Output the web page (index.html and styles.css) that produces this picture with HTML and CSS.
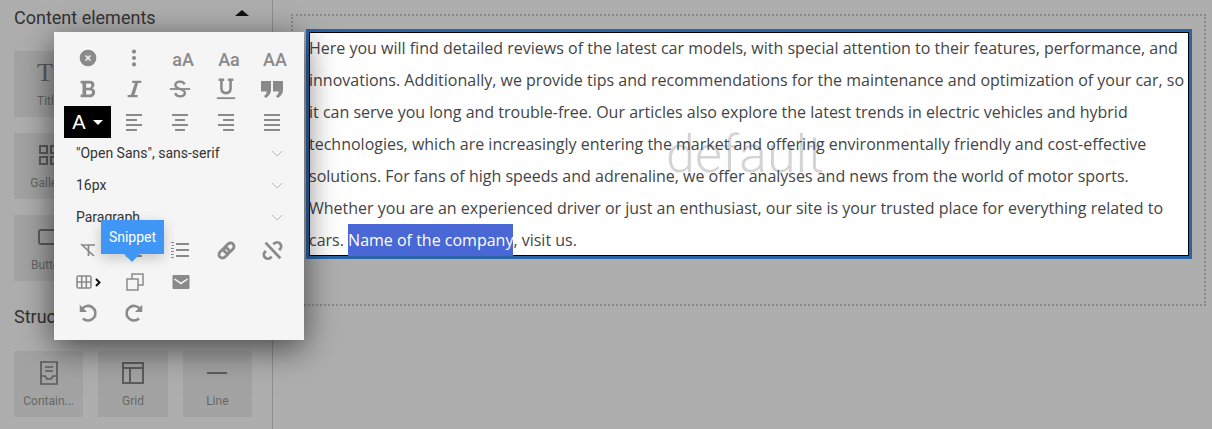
FILE: index.html
```html
<!DOCTYPE html>
<html lang="en">
<head>
  <meta charset="UTF-8" />
  <title>Page builder</title>
  <link rel="stylesheet" href="styles.css">
</head>
<body>
  <div class="layout">
    <aside class="sidebar">
      <div class="section-head">
        <h2>Content elements</h2>
        <span class="collapse-arrow"></span>
      </div>
      <div class="tiles">
        <div class="tile">
          <span class="tile-icon tile-t">Tt</span>
          <span class="tile-label">Title</span>
        </div>
        <div class="tile"></div>
        <div class="tile"></div>
        <div class="tile">
          <svg class="tile-icon" viewBox="0 0 24 24" width="24" height="24"><path fill="none" stroke="#5c5c5c" stroke-width="2" d="M3 3h7v7H3zM14 3h7v7h-7zM3 14h7v7H3zM14 14h7v7h-7z"/></svg>
          <span class="tile-label">Gallery</span>
        </div>
        <div class="tile"></div>
        <div class="tile"></div>
        <div class="tile">
          <svg class="tile-icon" viewBox="0 0 24 24" width="24" height="24"><rect x="2" y="5" width="20" height="14" rx="2" fill="none" stroke="#5c5c5c" stroke-width="2"/></svg>
          <span class="tile-label">Button</span>
        </div>
        <div class="tile"></div>
        <div class="tile"></div>
      </div>
      <div class="section-head section-head-2">
        <h2>Structure</h2>
      </div>
      <div class="tiles">
        <div class="tile">
          <svg class="tile-icon" viewBox="0 0 24 24" width="24" height="24"><path fill="none" stroke="#5c5c5c" stroke-width="1.700" d="M4 1h16v22H4zM4 15h4l2 3h4l2-3h4M8 6h8M8 10h8"/></svg>
          <span class="tile-label">Contain...</span>
        </div>
        <div class="tile">
          <svg class="tile-icon" viewBox="0 0 24 24" width="24" height="24"><path fill="none" stroke="#5c5c5c" stroke-width="2" d="M2 2h20v20H2zM2 7h20M9 7v15"/></svg>
          <span class="tile-label">Grid</span>
        </div>
        <div class="tile">
          <svg class="tile-icon" viewBox="0 0 24 24" width="24" height="24"><path fill="none" stroke="#5c5c5c" stroke-width="2" d="M2 12h20"/></svg>
          <span class="tile-label">Line</span>
        </div>
      </div>
    </aside>

    <main class="canvas">
      <div class="drop-zone">
        <div class="editor-frame">
          <div class="editor-text">
            <span class="watermark">default</span>
            <p>Here you will find detailed reviews of the latest car models, with special attention to their features, performance, and innovations. Additionally, we provide tips and recommendations for the maintenance and optimization of your car, so it can serve you long and trouble-free. Our articles also explore the latest trends in electric vehicles and hybrid technologies, which are increasingly entering the market and offering environmentally friendly and cost-effective solutions. For fans of high speeds and adrenaline, we offer analyses and news from the world of motor sports. Whether you are an experienced driver or just an enthusiast, our site is your trusted place for everything related to cars. <span class="selected">Name of the company</span>, visit us.</p>
          </div>
        </div>
      </div>
    </main>
  </div>

  <div class="toolbar">
    <div class="tool-row">
      <button class="tool"><svg viewBox="0 0 24 24" width="20" height="20"><circle cx="12" cy="12" r="10" fill="#8a8a8a"/><path d="M9 9l6 6M15 9l-6 6" stroke="#f5f5f5" stroke-width="1.800"/></svg></button>
      <button class="tool"><svg viewBox="0 0 24 24" width="22" height="22"><circle cx="12" cy="5" r="2.300" fill="#8a8a8a"/><circle cx="12" cy="12" r="2.300" fill="#8a8a8a"/><circle cx="12" cy="19" r="2.300" fill="#8a8a8a"/></svg></button>
      <button class="tool tool-case case-1">aA</button>
      <button class="tool tool-case">Aa</button>
      <button class="tool tool-case">AA</button>
    </div>
    <div class="tool-row tool-row-format">
      <button class="tool"><svg viewBox="0 0 24 24" width="22" height="22"><path fill="#8a8a8a" d="M4 3h10c3 0 5 1.700 5 4.300 0 1.800-1 3.200-2.500 3.900 2 .6 3.300 2.200 3.300 4.300 0 3.200-2.300 5.500-5.800 5.500H4v-3h2V6H4zM10 6v4.500h3.500c1.400 0 2.200-.9 2.200-2.300S14.900 6 13.500 6zM10 13.300V18h3.900c1.600 0 2.500-.9 2.500-2.400s-.9-2.300-2.500-2.300z"/></svg></button>
      <button class="tool"><svg viewBox="0 0 24 24" width="22" height="22"><path fill="#8a8a8a" d="M10 3h10v2.500h-3.500L12.500 18.500H16V21H5v-2.500h3.500L13 5.500h-3z"/></svg></button>
      <button class="tool"><svg viewBox="0 0 24 24" width="22" height="22"><path fill="none" stroke="#8a8a8a" stroke-width="2.600" d="M17 7c-.6-2-2.500-3-5-3-2.800 0-5 1.300-5 3.800 0 4.700 10.300 3.700 10.300 8.400 0 2.500-2.300 3.800-5.200 3.800-2.800 0-4.700-1.200-5.300-3.500"/><path stroke="#8a8a8a" stroke-width="2" d="M1 12h22"/></svg></button>
      <button class="tool"><svg viewBox="0 0 24 24" width="22" height="22"><path fill="none" stroke="#8a8a8a" stroke-width="2.800" d="M4 2h6M14 2h6M7 2v9c0 3.500 2 5.500 5 5.500s5-2 5-5.500V2"/><path stroke="#8a8a8a" stroke-width="2" d="M2 22h20"/></svg></button>
      <button class="tool"><svg viewBox="0 0 24 24" width="24" height="24"><path fill="#8a8a8a" d="M1 4h10v9c0 3.500-2 6-5.500 8L4 19c1.500-1 2.500-2.500 2.800-4.500H1zM13 4h10v9c0 3.500-2 6-5.500 8L16 19c1.500-1 2.500-2.500 2.800-4.500H13z"/></svg></button>
    </div>
    <div class="tool-row">
      <button class="tool tool-color"><span class="color-a">A</span><span class="color-caret"></span></button>
      <button class="tool"><svg viewBox="0 0 16 18" width="16" height="18"><path stroke="#8a8a8a" stroke-width="2" d="M0 2h16M0 7h11M0 12h16M0 17h11"/></svg></button>
      <button class="tool"><svg viewBox="0 0 16 18" width="16" height="18"><path stroke="#8a8a8a" stroke-width="2" d="M0 2h16M3 7h10M0 12h16M3 17h10"/></svg></button>
      <button class="tool"><svg viewBox="0 0 16 18" width="16" height="18"><path stroke="#8a8a8a" stroke-width="2" d="M0 2h16M5 7h11M0 12h16M5 17h11"/></svg></button>
      <button class="tool"><svg viewBox="0 0 16 18" width="16" height="18"><path stroke="#8a8a8a" stroke-width="2" d="M0 2h16M0 7h16M0 12h16M0 17h16"/></svg></button>
    </div>
    <div class="select-row"><span>"Open Sans", sans-serif</span><svg class="chevron" viewBox="0 0 12 7" width="12" height="7"><path fill="none" stroke="#b8b8b8" d="M1 1l5 5 5-5"/></svg></div>
    <div class="select-row"><span>16px</span><svg class="chevron" viewBox="0 0 12 7" width="12" height="7"><path fill="none" stroke="#b8b8b8" d="M1 1l5 5 5-5"/></svg></div>
    <div class="select-row"><span>Paragraph</span><svg class="chevron" viewBox="0 0 12 7" width="12" height="7"><path fill="none" stroke="#b8b8b8" d="M1 1l5 5 5-5"/></svg></div>
    <div class="tool-row">
      <button class="tool"><svg viewBox="0 0 16 14" width="16" height="14"><path fill="none" stroke="#8a8a8a" stroke-width="1.700" d="M2 2h13M8.500 2v11M1 1l13 12"/></svg></button>
      <button class="tool"><svg viewBox="0 0 18 18" width="18" height="18"><path stroke="#8a8a8a" stroke-width="2" d="M5 3h12M5 9h12M5 15h12M1 3h2M1 9h2M1 15h2"/></svg></button>
      <button class="tool"><svg viewBox="0 0 18 16" width="18" height="16"><path stroke="#8a8a8a" stroke-width="2" d="M5 2h13M5 8h13M5 14h13"/><path stroke="#8a8a8a" stroke-width="1" d="M0 .5h3M1 3.500h2M0 6.500h3M0 9.500h3M0 12.500h3M0 15.500h3"/></svg></button>
      <button class="tool"><svg viewBox="0 0 24 24" width="21" height="21"><g transform="rotate(-45 12 12)" fill="none" stroke="#8a8a8a" stroke-width="3.200"><rect x="1.500" y="8" width="13" height="8" rx="4"/><rect x="9.500" y="8" width="13" height="8" rx="4"/></g></svg></button>
      <button class="tool"><svg viewBox="0 0 24 24" width="21" height="21"><path fill="none" stroke="#8a8a8a" stroke-width="3.200" d="M13 5l1-1a4.500 4.500 0 0 1 6.500 6.500l-1 1M11 19l-1 1a4.500 4.500 0 0 1-6.500-6.500l1-1M4 3l17 18"/></svg></button>
    </div>
    <div class="tool-row tool-row-tight">
      <button class="tool tool-table"><svg viewBox="0 0 16 14" width="16" height="14"><path fill="none" stroke="#8a8a8a" stroke-width="1.600" d="M1 2.500a1.500 1.500 0 0 1 1.500-1.500h11a1.500 1.500 0 0 1 1.500 1.500v9a1.500 1.500 0 0 1-1.500 1.500h-11a1.500 1.500 0 0 1-1.500-1.500zM1 7h14M5.700 1v12M10.300 1v12"/></svg><svg viewBox="0 0 6 9" width="6" height="9"><path fill="none" stroke="#111" stroke-width="2" d="M1 1l3.500 3.500L1 8"/></svg></button>
      <button class="tool"><svg class="nudge" viewBox="0 0 18 18" width="18" height="18"><path fill="none" stroke="#8a8a8a" stroke-width="1.500" d="M1 6h11v11H1zM6 6V1h11v11h-5"/></svg></button>
      <button class="tool"><svg class="nudge" viewBox="0 0 18 16" width="18" height="16"><path fill="#8a8a8a" d="M1.500 1h15c.5 0 1 .5 1 1v12c0 .5-.5 1-1 1h-15c-.5 0-1-.5-1-1V2c0-.5.500-1 1-1zM9 8.500L3 4.500 2 5.500l7 5 7-5-1-1z"/></svg></button>
    </div>
    <div class="tool-row">
      <button class="tool"><svg viewBox="0 0 24 24" width="22" height="22"><path fill="none" stroke="#8a8a8a" stroke-width="2.800" d="M5 8.500A8 8 0 1 1 6.500 18"/><path fill="#8a8a8a" d="M3 3v8h8z"/></svg></button>
      <button class="tool"><svg viewBox="0 0 24 24" width="22" height="22"><path fill="none" stroke="#8a8a8a" stroke-width="2.800" d="M19 8.500A8 8 0 1 0 17.500 18"/><path fill="#8a8a8a" d="M21 3v8h-8z"/></svg></button>
    </div>
    <div class="tooltip">Snippet</div>
  </div>
</body>
</html>
```

FILE: styles.css
```css
* {
  margin: 0;
  padding: 0;
  box-sizing: border-box;
}

html, body {
  height: 429px;
  overflow: hidden;
}

body {
  background: #aeaeae;
  font-family: 'Roboto', sans-serif;
  position: relative;
}

.layout {
  display: flex;
  height: 429px;
}

.sidebar {
  width: 273px;
  flex-shrink: 0;
  border-right: 1px solid #8e8e8e;
  padding: 0 14px;
}

.section-head {
  display: flex;
  justify-content: space-between;
  align-items: center;
  height: 34px;
  padding-right: 9px;
}

.section-head h2 {
  font-size: 18px;
  font-weight: 400;
  color: #333;
}

.section-head-2 {
  margin: 18px 0 18px;
}

.collapse-arrow {
  border-left: 7px solid transparent;
  border-right: 7px solid transparent;
  border-bottom: 6px solid #111;
  margin-bottom: 8px;
}

.tiles {
  display: grid;
  grid-template-columns: repeat(3, 69.33px);
  column-gap: 15px;
  row-gap: 16px;
  padding-top: 17px;
}

.section-head-2 + .tiles {
  padding-top: 0;
}

.tile {
  height: 66px;
  background: #a3a3a3;
  display: flex;
  flex-direction: column;
  align-items: center;
  justify-content: space-between;
  padding: 10px 0 9px;
}

.tile-icon {
  display: block;
}

.tile-t {
  font-family: 'Liberation Serif', serif;
  font-size: 26px;
  line-height: 24px;
  color: #5c5c5c;
}

.tile-label {
  font-size: 12px;
  color: #666;
}

.canvas {
  flex: 1;
  padding: 14px 6px 0 18px;
}

.drop-zone {
  height: 292px;
  border: 2px dotted #8a8a8a;
  padding: 13px 12px 0 13px;
}

.editor-frame {
  border: 3px solid #2a64a6;
  background: #fff;
}

.editor-text {
  position: relative;
  height: 224px;
  overflow: hidden;
  outline: 1px solid #000;
  outline-offset: -1px;
  font-family: 'Open Sans', sans-serif;
  font-size: 16px;
  line-height: 32px;
  color: #444;
}

.editor-text p {
  position: relative;
}

.selected {
  display: inline-block;
  background: #4a67d6;
  color: #fff;
}

.watermark {
  position: absolute;
  left: 357px;
  top: 93px;
  font-family: 'Roboto', sans-serif;
  font-size: 52px;
  font-weight: 300;
  line-height: 60px;
  color: rgba(120, 120, 120, 0.32);
}

.toolbar {
  position: absolute;
  left: 54px;
  top: 32px;
  width: 250px;
  height: 308px;
  background: #f5f5f5;
  box-shadow: 0 8px 32px rgba(0, 0, 0, 0.6);
  padding: 10px 10px 0;
}

.tool-row {
  display: flex;
  height: 32px;
  padding-left: 1px;
}

.tool-row-format {
  margin-top: -1px;
  margin-bottom: 1px;
}

.tool-row-tight {
  margin-bottom: -1px;
}

.tool {
  flex: none;
  width: 46px;
  height: 32px;
  border: none;
  background: none;
  display: flex;
  align-items: center;
  justify-content: center;
}

.tool-case {
  font-family: 'Roboto', sans-serif;
  font-size: 18px;
  font-weight: 500;
  color: #8a8a8a;
  padding-top: 3px;
}

.case-1 {
  margin-left: 3px;
}

.tool-color {
  width: 47px;
  margin-left: -1px;
  background: #000;
  color: #fff;
  gap: 7px;
}

.color-a {
  font-size: 20px;
  font-weight: 300;
}

.color-caret {
  border-left: 5px solid transparent;
  border-right: 5px solid transparent;
  border-top: 5px solid #fff;
}

.select-row {
  height: 32px;
  display: flex;
  justify-content: space-between;
  align-items: center;
  padding: 0 11px 2px 12px;
  font-size: 14px;
  color: #333;
}

.tool-table {
  gap: 3px;
}

.nudge {
  margin-left: 2px;
}

.tooltip {
  position: absolute;
  left: 47px;
  top: 188px;
  width: 63px;
  height: 34px;
  background: #4096f5;
  color: #fff;
  font-size: 14px;
  display: flex;
  align-items: center;
  justify-content: center;
  box-shadow: 0 4px 14px rgba(0, 0, 0, 0.2);
}

.tooltip::after {
  content: "";
  position: absolute;
  left: 23px;
  top: 34px;
  border-left: 8px solid transparent;
  border-right: 8px solid transparent;
  border-top: 8px solid #4096f5;
}
```
